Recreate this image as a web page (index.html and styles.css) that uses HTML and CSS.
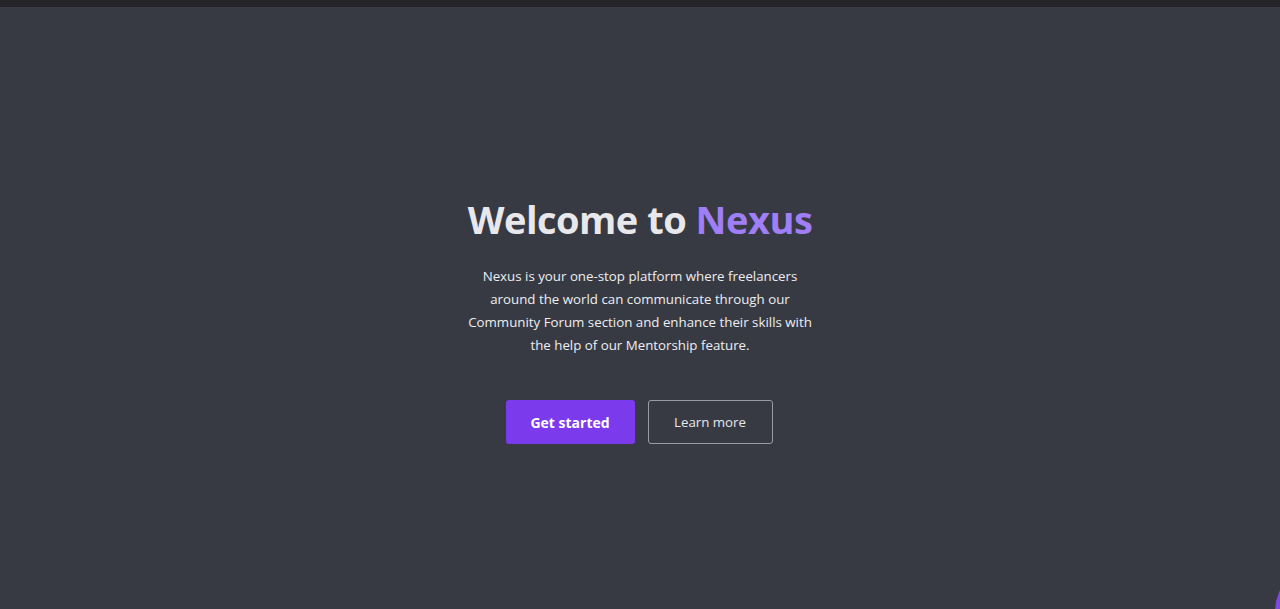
FILE: index.html
```html
<!DOCTYPE html>
<html lang="en">
<head>
<meta charset="utf-8">
<title>Nexus</title>
<link rel="stylesheet" href="styles.css">
</head>
<body>
<div class="topbar"></div>
<main class="hero">
  <h1 class="title">Welcome to <span class="accent">Nexus</span></h1>
  <p class="lead">Nexus is your one-stop platform where freelancers around the world can communicate through our Community Forum section and enhance their skills with the help of our Mentorship feature.</p>
  <div class="actions">
    <a class="btn btn-primary" href="#">Get started</a>
    <a class="btn btn-outline" href="#">Learn more</a>
  </div>
</main>
<div class="fab-clip"><div class="fab"></div></div>
</body>
</html>
```
FILE: styles.css
```css
html, body {
  margin: 0;
  padding: 0;
  height: 100%;
  overflow: hidden;
}
body {
  background: #383a43;
  font-family: "Open Sans", "Noto Sans", sans-serif;
  color: #e5e7eb;
  position: relative;
}
.topbar {
  height: 7px;
  background: #242429;
}
.hero {
  display: flex;
  flex-direction: column;
  align-items: center;
  padding-top: 186px;
}
.title {
  margin: 0;
  font-size: 38px;
  font-weight: 700;
  color: #e8e8ec;
  letter-spacing: -0.5px;
}
.accent {
  color: #a07ef5;
}
.lead {
  margin: 20px 0 0;
  width: 350px;
  text-align: center;
  font-size: 13.3px;
  line-height: 23px;
  color: #eceef2;
}
.actions {
  display: flex;
  gap: 13px;
  margin-top: 43px;
  margin-right: 2px;
}
.btn {
  display: flex;
  align-items: center;
  justify-content: center;
  height: 44px;
  box-sizing: border-box;
  border-radius: 3px;
  font-size: 14px;
  text-decoration: none;
}
.btn-primary {
  width: 129px;
  background: #7c3aed;
  color: #ffffff;
  font-weight: 700;
}
.btn-outline {
  width: 125px;
  border: 1px solid #9a9ca4;
  color: #e5e7eb;
  font-size: 13.3px;
}
.fab-clip {
  position: absolute;
  right: 0;
  bottom: 0;
  width: 5px;
  height: 47px;
  overflow: hidden;
}
.fab {
  width: 100px;
  height: 100px;
  border-radius: 50%;
  background: #7c4ae0;
}
```
